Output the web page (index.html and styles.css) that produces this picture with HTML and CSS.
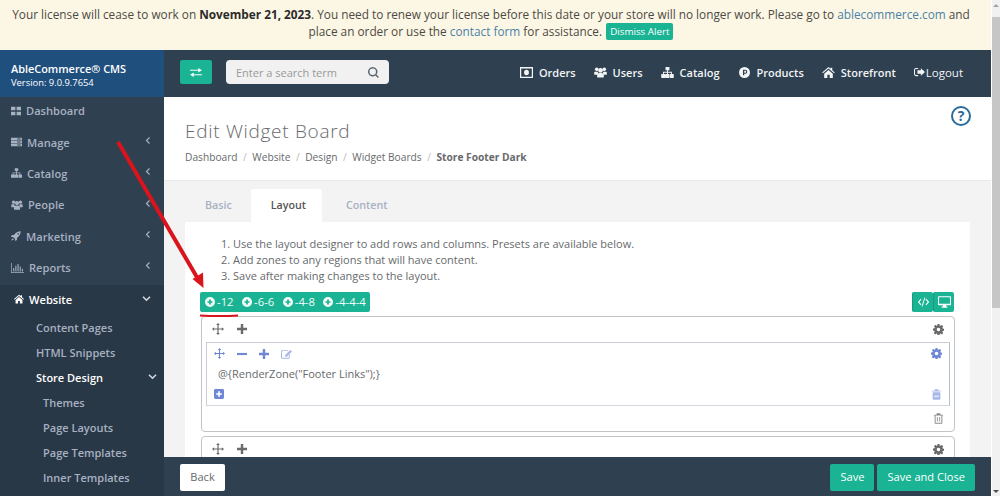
FILE: index.html
```html
<!DOCTYPE html>
<html lang="en">
<head>
<meta charset="utf-8">
<title>Edit Widget Board</title>
<link rel="stylesheet" href="styles.css">
</head>
<body>
<svg class="defs" width="0" height="0" aria-hidden="true">
  <symbol id="i-th" viewBox="0 0 16 14" preserveAspectRatio="none"><path d="M0 1h7v5H0zM9 1h7v5H9zM0 8h7v5H0zM9 8h7v5H9z"/></symbol>
  <symbol id="i-server" viewBox="0 0 16 14" preserveAspectRatio="none"><path fill-rule="evenodd" d="M0 1h16v3.400H0zM0 5.300h16v3.400H0zM0 9.600h16V13H0zM9 2v1.400h5V2zM9 6.300v1.400h5V6.300zM9 10.600V12h5v-1.400z"/></symbol>
  <symbol id="i-sitemap" viewBox="0 0 16 14"><path d="M5.500 0h5v4H8.600v2.200h5V9H15.500a.5.500 0 0 1 .5.500V13.500a.5.500 0 0 1-.5.500h-4a.5.500 0 0 1-.5-.5V9.500a.5.500 0 0 1 .5-.5H12.500V7.400H8.600V9h1.400a.5.500 0 0 1 .5.500v4a.5.500 0 0 1-.5.500H6a.5.500 0 0 1-.5-.5v-4A.5.500 0 0 1 6 9h1.400V7.400H3.500V9H5a.5.500 0 0 1 .5.500v4A.5.500 0 0 1 5 14H.5a.5.500 0 0 1-.5-.5v-4A.5.500 0 0 1 .5 9h1.800V6.200h5.100V4H5.500z"/></symbol>
  <symbol id="i-users" viewBox="0 0 16 14"><circle cx="3.200" cy="3" r="2.300"/><circle cx="12.800" cy="3" r="2.300"/><circle cx="8" cy="4.300" r="3"/><path d="M0 6.500C.5 5.800 4 5.800 4.700 6.500 4.900 8 5 8.800 3.800 10H0zM16 6.500C15.500 5.800 12 5.800 11.300 6.500 11.100 8 11 8.800 12.200 10H16zM4.500 8.500C5.500 7.500 10.500 7.500 11.500 8.500 12.500 9.500 12.500 12 12 13.500H4C3.500 12 3.500 9.500 4.500 8.500z"/></symbol>
  <symbol id="i-rocket" viewBox="0 0 16 16"><path d="M15.500.5C11 .5 7.500 2.500 4.800 6.500H1.500L0 9.500h3.200l3.300 3.300V16l3-1.500v-3.300c4-2.700 6-6.200 6-10.700zM11.500 3.200a1.300 1.300 0 1 1 0 2.600 1.300 1.300 0 0 1 0-2.600zM2.800 11.500C1.500 12.300 1 14 .8 15.200 2 15 3.700 14.500 4.500 13.200z"/></symbol>
  <symbol id="i-chart" viewBox="0 0 18 14" preserveAspectRatio="none"><path d="M0 0h1v13h17v1H0zM3 7h1.500v5H3zM6 4h1.500v8H6zM9 1.500h1.500V12H9zM12 5h1.500v7H12zM15 8h1.500v4H15z"/></symbol>
  <symbol id="i-home" viewBox="0 0 16 14"><path d="M8 0l2.600 2.300V1h2.200v3.200L16 7l-.9 1L8 2 .9 8 0 7zM2.500 8.500L8 3.800l5.500 4.700V14H9.500v-4h-3v4h-4z"/></symbol>
  <symbol id="i-money" viewBox="0 0 16 12" preserveAspectRatio="none"><path fill-rule="evenodd" d="M0 0h16v12H0zM1.500 1.500v9h13v-9zM8 3a3 3 0 1 1 0 6 3 3 0 0 1 0-6z"/></symbol>
  <symbol id="i-exchange" viewBox="0 0 16 12"><path d="M0 2.200h11V0l5 3-5 3V3.800H0zM16 8.200H5V6L0 9l5 3V9.800h11z"/></symbol>
  <symbol id="i-p" viewBox="0 0 16 16"><path fill-rule="evenodd" d="M8 0a8 8 0 1 1 0 16A8 8 0 0 1 8 0zM5.800 4v8h1.800V9.800h1.500a2.900 2.900 0 0 0 0-5.800zM7.600 5.600h1.500a1.300 1.300 0 0 1 0 2.600H7.600z"/></symbol>
  <symbol id="i-out" viewBox="0 0 16 14"><path d="M6 1H3a3 3 0 0 0-3 3v6a3 3 0 0 0 3 3h3v-1.500H3A1.500 1.500 0 0 1 1.500 10V4A1.500 1.500 0 0 1 3 2.500h3z"/><path d="M10 1.500l6 5.500-6 5.500V9.500H5v-5h5z"/></symbol>
  <symbol id="i-move" viewBox="0 0 16 16"><path d="M8 0l2.500 2.800H8.800v4.400h4.400V5.500L16 8l-2.800 2.500V8.800H8.800v4.400h1.700L8 16l-2.500-2.800h1.700V8.800H2.800v1.700L0 8l2.800-2.500v1.700h4.400V2.800H5.500z"/></symbol>
  <symbol id="i-plus" viewBox="0 0 14 14"><path d="M5.300 0h3.400v5.300H14v3.400H8.700V14H5.300V8.700H0V5.300h5.300z"/></symbol>
  <symbol id="i-minus" viewBox="0 0 14 14"><path d="M0 5.500h14v3H0z"/></symbol>
  <symbol id="i-edit" viewBox="0 0 16 14"><path d="M2 1.500h9L9.800 2.800H2.500a1 1 0 0 0-1 1v7.700a1 1 0 0 0 1 1h8a1 1 0 0 0 1-1V8.500L12.800 7.200V12a2 2 0 0 1-2 2H2a2 2 0 0 1-2-2V3.500a2 2 0 0 1 2-2z"/><path d="M13.500 1L16 3.500 9 10.500l-3.200.8.700-3.300z"/></symbol>
  <symbol id="i-gear" viewBox="0 0 16 16"><path fill-rule="evenodd" d="M6.600 0h2.800l.4 2.200 1.200.5L12.900 1.400l2 2-1.300 1.900.5 1.200 2.200.4v2.800l-2.200.4-.5 1.200 1.300 1.900-2 2-1.900-1.300-1.200.5-.4 2.200H6.600l-.4-2.200-1.200-.5-1.900 1.300-2-2 1.300-1.900-.5-1.200L0 9.400V6.600l2.200-.4.5-1.200L1.400 3.100l2-2L5 2.700l1.200-.5zM8 5.400a2.600 2.600 0 1 0 0 5.200 2.600 2.600 0 0 0 0-5.200z"/></symbol>
  <symbol id="i-trash" viewBox="0 0 14 16"><path fill-rule="evenodd" d="M4.500 0h5l1 2H14v1.500H13V14.500a1.500 1.500 0 0 1-1.500 1.500h-9A1.500 1.500 0 0 1 1 14.500V3.500H0V2h3.500zM2.500 3.500v11h9v-11zM4.500 5.500h1.300v7H4.500zM8.200 5.500h1.300v7H8.200z"/></symbol>
  <symbol id="i-trash-solid" viewBox="0 0 14 16"><path fill-rule="evenodd" d="M4.500 0h5l1 2H14v1.500H0V2h3.500zM1 4.500h12v10a1.500 1.500 0 0 1-1.500 1.500h-9A1.500 1.500 0 0 1 1 14.500zM3.500 10v1.500h7V10z"/></symbol>
  <symbol id="i-plus-sq" viewBox="0 0 14 14"><path fill-rule="evenodd" d="M2 0h10a2 2 0 0 1 2 2v10a2 2 0 0 1-2 2H2a2 2 0 0 1-2-2V2a2 2 0 0 1 2-2zM5.800 3v2.800H3v2.400h2.800V11h2.400V8.200H11V5.800H8.200V3z"/></symbol>
  <symbol id="i-plus-c" viewBox="0 0 14 14"><path fill-rule="evenodd" d="M7 0a7 7 0 1 1 0 14A7 7 0 0 1 7 0zM5.800 3.500v2.300H3.500v2.400h2.300v2.300h2.400V8.200h2.300V5.800H8.200V3.500z"/></symbol>
  <symbol id="i-code" viewBox="0 0 16 14"><path d="M4.500 3L1 7l3.500 4 1-.8L2.800 7l2.700-3.200zM11.500 3L15 7l-3.500 4-1-.8L13.200 7l-2.700-3.200zM9.200 1.500l1.100.3-3.500 10.700-1.100-.3z"/></symbol>
  <symbol id="i-desktop" viewBox="0 0 16 14"><path fill-rule="evenodd" d="M1 0h14a1 1 0 0 1 1 1v9a1 1 0 0 1-1 1h-5v1.500h1.500V14h-7v-1.500H6V11H1a1 1 0 0 1-1-1V1a1 1 0 0 1 1-1zM1.300 1.300v7.900h13.400V1.300z"/></symbol>
  <symbol id="i-search" viewBox="0 0 14 14"><path fill-rule="evenodd" d="M6 0a6 6 0 0 1 4.800 9.600l3.100 3.100-1.300 1.300-3.100-3.100A6 6 0 1 1 6 0zm0 1.900a4.100 4.100 0 1 0 0 8.200 4.100 4.100 0 0 0 0-8.200z"/></symbol>
  <symbol id="i-left" viewBox="0 0 8 10"><path d="M6 1L2 5l4 4" fill="none" stroke="currentColor" stroke-width="1.600"/></symbol>
  <symbol id="i-down" viewBox="0 0 10 8"><path d="M1 2l4 4 4-4" fill="none" stroke="currentColor" stroke-width="1.800"/></symbol>
</svg>

<div class="page">
  <div class="alert">
    <p class="alert-line">Your license will cease to work on <strong>November 21, 2023</strong>. You need to renew your license before this date or your store will no longer work. Please go to <a href="#">ablecommerce.com</a> and</p>
    <p class="alert-line">place an order or use the <a href="#">contact form</a> for assistance. <button class="dismiss" type="button">Dismiss Alert</button></p>
  </div>

  <div class="shell">
    <aside class="sidebar">
      <div class="brand">
        <div class="brand-name">AbleCommerce® CMS</div>
        <div class="brand-version">Version: 9.0.9.7654</div>
      </div>
      <nav class="side-nav">
        <a class="side-item" href="#"><svg class="side-icon w-10"><use href="#i-th"/></svg>Dashboard</a>
        <a class="side-item" href="#"><svg class="side-icon"><use href="#i-server"/></svg>Manage<svg class="chev"><use href="#i-left"/></svg></a>
        <a class="side-item" href="#"><svg class="side-icon"><use href="#i-sitemap"/></svg>Catalog<svg class="chev"><use href="#i-left"/></svg></a>
        <a class="side-item" href="#"><svg class="side-icon w-12"><use href="#i-users"/></svg>People<svg class="chev"><use href="#i-left"/></svg></a>
        <a class="side-item" href="#"><svg class="side-icon w-10"><use href="#i-rocket"/></svg>Marketing<svg class="chev"><use href="#i-left"/></svg></a>
        <a class="side-item" href="#"><svg class="side-icon w-13"><use href="#i-chart"/></svg>Reports<svg class="chev"><use href="#i-left"/></svg></a>
        <div class="side-active">
          <a class="side-item side-item-on" href="#"><svg class="side-icon w-10"><use href="#i-home"/></svg>Website<svg class="chev-down"><use href="#i-down"/></svg></a>
          <a class="sub-item" href="#">Content Pages</a>
          <a class="sub-item" href="#">HTML Snippets</a>
          <a class="sub-item sub-item-on" href="#">Store Design<svg class="chev-down chev-sub"><use href="#i-down"/></svg></a>
          <a class="sub-item sub-deep" href="#">Themes</a>
          <a class="sub-item sub-deep" href="#">Page Layouts</a>
          <a class="sub-item sub-deep" href="#">Page Templates</a>
          <a class="sub-item sub-deep" href="#">Inner Templates</a>
        </div>
      </nav>
    </aside>

    <div class="right">
      <header class="topbar">
        <button class="toggle" type="button"><svg class="toggle-icon"><use href="#i-exchange"/></svg></button>
        <div class="search">
          <span class="search-text">Enter a search term</span>
          <svg class="search-icon"><use href="#i-search"/></svg>
        </div>
        <nav class="top-nav">
          <a class="top-link" href="#"><svg class="top-icon"><use href="#i-money"/></svg>Orders</a>
          <a class="top-link" href="#"><svg class="top-icon"><use href="#i-users"/></svg>Users</a>
          <a class="top-link" href="#"><svg class="top-icon"><use href="#i-sitemap"/></svg>Catalog</a>
          <a class="top-link" href="#"><svg class="top-icon"><use href="#i-p"/></svg>Products</a>
          <a class="top-link" href="#"><svg class="top-icon"><use href="#i-home"/></svg>Storefront</a>
          <a class="top-link top-logout" href="#"><svg class="top-icon logout-icon"><use href="#i-out"/></svg>Logout</a>
        </nav>
      </header>

      <main class="content">
        <section class="page-head">
          <div>
            <h1 class="title">Edit Widget Board</h1>
            <ol class="crumbs">
              <li>Dashboard</li>
              <li>Website</li>
              <li>Design</li>
              <li>Widget Boards</li>
              <li class="crumb-on">Store Footer Dark</li>
            </ol>
          </div>
          <span class="help">?</span>
        </section>

        <section class="work">
          <div class="tabs">
            <a class="tab" href="#">Basic</a>
            <a class="tab tab-on" href="#">Layout</a>
            <a class="tab tab-last" href="#">Content</a>
          </div>
          <div class="panel">
            <ol class="steps">
              <li>Use the layout designer to add rows and columns. Presets are available below.</li>
              <li>Add zones to any regions that will have content.</li>
              <li>Save after making changes to the layout.</li>
            </ol>
            <div class="tools">
              <div class="presets">
                <span class="preset"><svg class="preset-icon"><use href="#i-plus-c"/></svg>-12</span>
                <span class="preset"><svg class="preset-icon"><use href="#i-plus-c"/></svg>-6-6</span>
                <span class="preset"><svg class="preset-icon"><use href="#i-plus-c"/></svg>-4-8</span>
                <span class="preset"><svg class="preset-icon"><use href="#i-plus-c"/></svg>-4-4-4</span>
              </div>
              <div class="views">
                <span class="view"><svg class="view-icon"><use href="#i-code"/></svg></span>
                <span class="view"><svg class="view-icon"><use href="#i-desktop"/></svg></span>
              </div>
            </div>

            <div class="row-box">
              <div class="row-bar">
                <div class="row-left">
                  <svg class="tool-icon"><use href="#i-move"/></svg>
                  <svg class="tool-icon tool-small"><use href="#i-plus"/></svg>
                </div>
                <svg class="tool-icon tool-gear"><use href="#i-gear"/></svg>
              </div>
              <div class="col-box">
                <div class="col-bar">
                  <div class="col-left">
                    <svg class="tool-icon"><use href="#i-move"/></svg>
                    <svg class="tool-icon tool-small"><use href="#i-minus"/></svg>
                    <svg class="tool-icon tool-small"><use href="#i-plus"/></svg>
                    <svg class="tool-icon tool-edit"><use href="#i-edit"/></svg>
                  </div>
                  <svg class="tool-icon tool-gear"><use href="#i-gear"/></svg>
                </div>
                <div class="zone">@{RenderZone("Footer Links");}</div>
                <div class="col-foot">
                  <svg class="tool-icon tool-add"><use href="#i-plus-sq"/></svg>
                  <svg class="tool-icon tool-trash-blue"><use href="#i-trash-solid"/></svg>
                </div>
              </div>
              <div class="row-foot"><svg class="tool-icon tool-trash"><use href="#i-trash"/></svg></div>
            </div>

            <div class="row-box">
              <div class="row-bar">
                <div class="row-left">
                  <svg class="tool-icon"><use href="#i-move"/></svg>
                  <svg class="tool-icon tool-small"><use href="#i-plus"/></svg>
                </div>
                <svg class="tool-icon tool-gear"><use href="#i-gear"/></svg>
              </div>
            </div>
          </div>
        </section>
      </main>

      <footer class="footer">
        <button class="btn btn-back" type="button">Back</button>
        <div class="footer-right">
          <button class="btn btn-green" type="button">Save</button>
          <button class="btn btn-green" type="button">Save and Close</button>
        </div>
      </footer>
    </div>
  </div>
</div>

<div class="scrollbar">
  <span class="scroll-up"></span>
  <span class="scroll-thumb"></span>
  <span class="scroll-down"></span>
</div>

<svg class="annotation" viewBox="0 0 1000 496" aria-hidden="true">
  <path d="M118 142L198 279" fill="none" stroke="#d9141c" stroke-width="4"/>
  <path d="M203.500 288L192.500 279 203 272.500z" fill="#d9141c"/>
  <path d="M200 315.500Q220 316.500 238 315.500" fill="none" stroke="#d9141c" stroke-width="2.200"/>
</svg>
</body>
</html>
```

FILE: styles.css
```css
* { box-sizing: border-box; }

html, body {
  margin: 0;
  height: 496px;
  overflow: hidden;
}

body {
  display: flex;
  font-family: "Open Sans", "Liberation Sans", sans-serif;
  font-size: 12px;
  color: #676a6c;
  background: #fff;
}

a { color: inherit; text-decoration: none; }
button { font-family: inherit; border: 0; padding: 0; }
svg { fill: currentColor; flex: none; }

.defs { position: absolute; }

.page {
  width: 991px;
  height: 496px;
  display: flex;
  flex-direction: column;
  overflow: hidden;
}

/* Alert */
.alert {
  height: 50px;
  flex: none;
  padding: 6px 9px 0 0;
  background: #fcf7e4;
  color: #4c4a44;
  font-size: 11.800px;
  line-height: 17px;
  text-align: center;
}
.alert-line { margin: 0; white-space: nowrap; }
.alert strong { color: #2b2b2b; }
.alert a { color: #4b82a8; }
.dismiss {
  height: 17px;
  padding: 0 4px;
  margin-left: 1px;
  background: #1ab394;
  color: #fff;
  border-radius: 2px;
  font-size: 9.800px;
  line-height: 17px;
  vertical-align: top;
}

/* Shell */
.shell { flex: 1; display: flex; min-height: 0; }

.sidebar {
  width: 164px;
  flex: none;
  background: #2f4050;
  color: #a7b1c2;
  font-weight: 600;
}
.brand {
  height: 46.500px;
  padding: 11px 0 0 11px;
  background: #1f4f7d;
  color: #fff;
}
.brand-name { font-size: 10.900px; font-weight: 600; line-height: 15px; }
.brand-version { font-size: 9.400px; font-weight: 400; line-height: 14px; }

.side-item {
  position: relative;
  display: flex;
  align-items: center;
  height: 31.400px;
  padding: 0 0 3px 11px;
  font-size: 11.100px;
  white-space: nowrap;
}
.side-icon { width: 11px; height: 10px; margin-right: 5px; }
.w-10 { width: 10px; }
.w-12 { width: 12px; }
.w-13 { width: 13px; }
.chev {
  position: absolute;
  right: 13px;
  top: 8px;
  width: 6px;
  height: 9px;
}
.side-active { background: #293846; padding-bottom: 30px; }
.side-item-on { color: #fff; padding: 0 0 1px 14px; height: 30px; }
.chev-down {
  position: absolute;
  right: 13px;
  top: 10px;
  width: 9px;
  height: 7px;
  color: #d5dae2;
}
.sub-item {
  position: relative;
  display: block;
  height: 25.100px;
  padding-left: 36px;
  line-height: 25px;
  font-size: 11px;
  white-space: nowrap;
}
.sub-item-on { color: #fff; }
.chev-sub { top: 8px; right: 7px; }
.sub-deep { padding-left: 43px; }

/* Right column */
.right { flex: 1; display: flex; flex-direction: column; min-width: 0; }

.topbar {
  height: 46.500px;
  flex: none;
  display: flex;
  align-items: center;
  padding: 0 28px 2px 16px;
  background: #2f4050;
}
.toggle {
  width: 32px;
  height: 24px;
  background: #1ab394;
  color: #f2fbf9;
  border-radius: 2px;
  display: flex;
  align-items: center;
  justify-content: center;
}
.toggle-icon { width: 12px; height: 9px; }
.search {
  width: 163px;
  height: 24px;
  margin-left: 14px;
  padding: 0 10px;
  display: flex;
  align-items: center;
  justify-content: space-between;
  background: #f1f1f1;
  border-radius: 4px;
  color: #9a9a9a;
  font-size: 11px;
}
.search-icon { width: 11px; height: 11px; color: #5b6570; }
.top-nav { margin-left: auto; display: flex; gap: 18px; }
.top-link {
  display: flex;
  align-items: center;
  gap: 6px;
  color: #f2f4f6;
  font-size: 11px;
  font-weight: 600;
  white-space: nowrap;
}
.top-icon { width: 13px; height: 11px; }
.top-logout { font-size: 11.500px; font-weight: 400; gap: 1px; }
.logout-icon { width: 11px; height: 10px; }

/* Content */
.content { flex: 1; min-height: 0; overflow: hidden; display: flex; flex-direction: column; }
.page-head {
  height: 84px;
  flex: none;
  padding: 22px 20px 0 21px;
  display: flex;
  justify-content: space-between;
  align-items: flex-start;
  background: #fff;
  border-bottom: 1px solid #e7eaec;
}
.title {
  margin: 0;
  font-size: 19px;
  font-weight: 300;
  line-height: 24px;
  letter-spacing: .7px;
}
.crumbs {
  list-style: none;
  display: flex;
  margin: 6px 0 0;
  padding: 0;
  font-size: 10.200px;
  line-height: 16px;
}
.crumbs li:not(:last-child)::after {
  content: "/";
  margin: 0 5.500px;
  color: #bbb;
}
.crumb-on { font-weight: 700; }
.help {
  width: 20px;
  height: 20px;
  margin-top: -13px;
  border: 2.200px solid #2a6b9c;
  border-radius: 50%;
  color: #2a6b9c;
  font-size: 14px;
  font-weight: 700;
  line-height: 15px;
  text-align: center;
}

.work {
  flex: 1;
  min-height: 0;
  padding: 8px 21px 0;
  background: #f3f3f4;
}
.tabs { display: flex; height: 33px; }
.tab {
  height: 33px;
  padding: 0 19px 0 20px;
  line-height: 32px;
  color: #a7b1c2;
  font-size: 10.700px;
  font-weight: 600;
}
.tab-on {
  padding-right: 16px;
  background: #fff;
  color: #555;
  border-radius: 3px 3px 0 0;
}
.tab-last { padding-left: 24px; }
.panel {
  background: #fff;
  padding: 14px 15px 0;
  height: 300px;
}
.steps {
  margin: 0;
  padding: 0 0 0 33px;
  height: 56px;
  font-size: 11px;
  line-height: 16px;
}
.tools {
  display: flex;
  justify-content: space-between;
  height: 20px;
  padding-right: 1px;
  margin-bottom: 4px;
}
.presets {
  display: flex;
  gap: 8.500px;
  padding: 0 4px 0 5px;
  height: 20px;
  align-items: center;
  background: #1ab394;
  color: #f2fbf9;
  border-radius: 2px;
  font-size: 11.300px;
}
.preset { display: flex; align-items: center; gap: 2px; }
.preset-icon { width: 10px; height: 10px; }
.views { display: flex; }
.view {
  width: 21px;
  height: 20px;
  display: flex;
  align-items: center;
  justify-content: center;
  background: #1ab394;
  color: #fff;
  border-left: 1px solid #169b81;
  border-radius: 2px;
}
.view-icon { width: 13px; height: 12px; }

.row-box {
  margin: 0 0 4px 1px;
  width: 754px;
  padding: 0 4px;
  border: 1px solid #c1c4c7;
  border-radius: 4px;
}
.row-bar {
  display: flex;
  justify-content: space-between;
  align-items: center;
  height: 25px;
  padding: 0 6px;
  color: #6b6b6b;
}
.row-left { display: flex; align-items: center; gap: 13px; }
.tool-icon { width: 12px; height: 12px; }
.tool-small { width: 10px; height: 10px; }
.tool-gear { width: 11px; height: 11px; }
.col-box {
  height: 64px;
  border: 1px solid #c7ccd6;
  border-right-color: #b9c0ce;
  border-bottom-color: #d2d6de;
  padding: 0 7px;
  color: #6f87d6;
}
.col-bar {
  display: flex;
  justify-content: space-between;
  align-items: center;
  height: 23px;
  padding-bottom: 1px;
}
.col-left { display: flex; align-items: center; gap: 12px; }
.col-left .tool-icon:first-child { width: 11px; height: 11px; }
.tool-edit { color: #a9b8e6; width: 11px; height: 10px; }
.zone {
  height: 16px;
  padding-left: 4px;
  color: #676a6c;
  font-size: 11px;
  line-height: 16px;
}
.col-foot {
  display: flex;
  justify-content: space-between;
  align-items: center;
  padding-top: 7px;
}
.tool-add { width: 10px; height: 10px; }
.tool-trash-blue { width: 9px; height: 11px; color: #a9b8e6; margin-right: 1px; }
.row-foot {
  height: 25px;
  display: flex;
  justify-content: flex-end;
  align-items: center;
  padding-right: 7px;
}
.tool-trash { width: 9px; height: 11px; color: #8a8a8a; }

/* Footer */
.footer {
  height: 39.500px;
  flex: none;
  display: flex;
  justify-content: space-between;
  padding: 7px 16px 0;
  background: #2f4050;
}
.footer-right { display: flex; gap: 3px; }
.btn {
  height: 27px;
  padding: 0 10px 1px;
  border-radius: 2px;
  font-size: 11.100px;
}
.btn-back { width: 45px; background: #fff; color: #676a6c; }
.btn-green { background: #1ab394; color: #fff; }

/* Scrollbar */
.scrollbar {
  width: 8px;
  height: 496px;
  margin-left: auto;
  display: flex;
  flex-direction: column;
  align-items: center;
  background: #f1f1f1;
}
.scroll-up {
  width: 0;
  height: 0;
  margin: 4px 0 10px;
  border: 3px solid transparent;
  border-top: 0;
  border-bottom-color: #a3a3a3;
}
.scroll-thumb { width: 100%; height: 291px; background: #c6c6c6; }
.scroll-down {
  width: 0;
  height: 0;
  margin-top: auto;
  margin-bottom: 3px;
  border: 3px solid transparent;
  border-bottom: 0;
  border-top-color: #505050;
}

/* Annotation drawn over the screenshot */
.annotation {
  position: absolute;
  left: 0;
  top: 0;
  width: 1000px;
  height: 496px;
  pointer-events: none;
}
```
